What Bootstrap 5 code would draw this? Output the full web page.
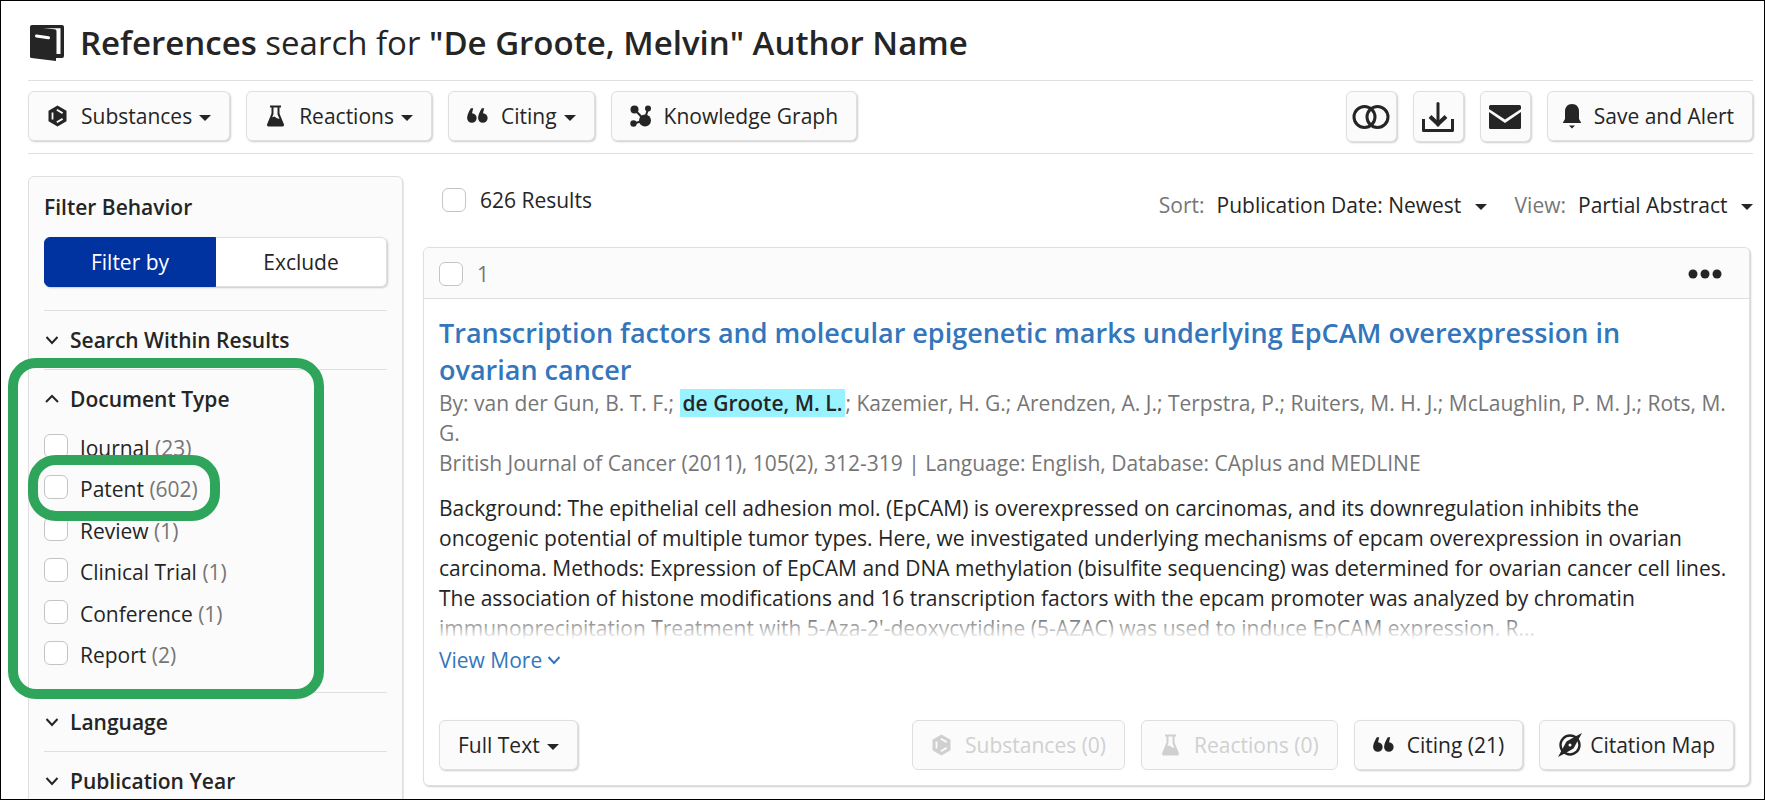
<!DOCTYPE html>
<html lang="en">
<head>
<meta charset="utf-8">
<meta name="viewport" content="width=device-width, initial-scale=1">
<title>References search</title>
<link href="https://cdn.jsdelivr.net/npm/bootstrap@5.3.0/dist/css/bootstrap.min.css" rel="stylesheet">
<style>
  :root { --ink: #252525; --muted: #767676; --line: #dfdfdf; --panel: #fbfbfb; --brand: #0032a0; --link: #3376bc; --mark: #2ea55b; }
  body { font-family: "Open Sans", "Noto Sans", sans-serif; font-size: 21px; line-height: 30px; color: var(--ink); background: #fff; }
  .page-frame { height: 100vh; overflow: hidden; border: 1px solid #000; padding: 0 11px 0 27px; }
  .page-title { height: 79px; gap: 14px; padding: 4px 0 0 2px; }
  .page-title h1 { font-size: 33px; line-height: 40px; font-weight: 400; }
  .page-title b, .heading { font-weight: 600; }
  .action-bar { border-top: 1px solid var(--line); border-bottom: 1px solid var(--line); padding: 10px 0; height: 74px; }
  .tool { --bs-btn-font-size: 21px; --bs-btn-line-height: 30px; --bs-btn-padding-x: 18px; --bs-btn-padding-y: 9px;
    --bs-btn-color: var(--ink); --bs-btn-bg: var(--panel); --bs-btn-border-color: var(--line); --bs-btn-border-radius: 6px;
    --bs-btn-hover-bg: #f1f1f1; --bs-btn-hover-border-color: #ccc;
    --bs-btn-disabled-color: #d0d0d0; --bs-btn-disabled-bg: var(--panel); --bs-btn-disabled-border-color: var(--line); --bs-btn-disabled-opacity: 1;
    display: inline-flex; align-items: center; height: 50px; white-space: nowrap; box-shadow: 1px 1px 2px rgba(0,0,0,.2); }
  .tool:disabled { box-shadow: none; }
  .tool svg { flex: none; }
  .tool .lead-icon { margin-right: 13px; }
  .tool-square { width: 51px; height: 51px; padding: 0; justify-content: center; }
  .tool-save { padding-left: 15px; }
  .down { width: 0; height: 0; border: 6px solid transparent; border-top-color: currentColor; border-bottom: 0; margin: 4px 0 0 7px; }
  .g16 { gap: 16px; }
  .columns { display: grid; grid-template-columns: 375px minmax(0, 1fr); gap: 20px; padding-top: 22px; }
  .panel { background: var(--panel); border: 1px solid var(--line); border-radius: 6px; box-shadow: 1px 1px 1px rgba(0,0,0,.1); padding: 15px 15px 200px; }
  .switch { box-shadow: 1px 1px 2px rgba(0,0,0,.2); border-radius: 6px; margin: 15px 0 23px; }
  .switch .btn { --bs-btn-font-size: 21px; --bs-btn-line-height: 30px; --bs-btn-padding-y: 9px; --bs-btn-color: var(--ink); --bs-btn-bg: #fff;
    --bs-btn-border-color: var(--line); --bs-btn-border-radius: 6px; --bs-btn-active-bg: var(--brand); --bs-btn-active-border-color: var(--brand); --bs-btn-active-color: #fff; flex: 1 1 0; }
  .facet { border-top: 1px solid var(--line); position: relative; }
  .facet-head { border: 0; background: none; padding: 14px 0 14px 1px; color: inherit; font-weight: 600; display: flex; align-items: center; gap: 11px; width: 100%; }
  .facet-open { padding-bottom: 18px; }
  .facet-list { height: 249px; padding: 0; margin: 3px 0 0; list-style: none; display: flex; flex-direction: column; justify-content: space-between; }
  .facet-list li { position: relative; display: flex; align-items: center; height: 41px; }
  .facet-list label { padding: 4px 0 0 12px; }
  .tick { width: 24px; height: 24px; flex: none; margin: 0; border: 1px solid #c4c4c4; border-radius: 6px !important; background-color: #fff; }
  .tick + .after { padding-left: 14px; }
  .count { color: var(--muted); }
  .ring { position: absolute; border: 10px solid var(--mark); border-radius: 28px; pointer-events: none; z-index: 2; }
  .ring-facet { inset: -12px 63px -7px -36px; }
  .ring-row { width: 192px; height: 66px; left: -16px; top: -12px; }
  .results-bar { height: 71px; padding: 0 0 0 19px; }
  .pick-all { padding-top: 9px; }
  .results-bar select { appearance: none; border: 0; color: var(--ink); padding: 0 25px 0 12px; font: inherit;
    background: url("data:image/svg+xml,%3Csvg xmlns='http://www.w3.org/2000/svg' width='12' height='6'%3E%3Cpath d='M0 0h12L6 6z' fill='%23252525'/%3E%3C/svg%3E") no-repeat right 0 top 14px; }
  .picks { padding-top: 14px; color: var(--muted); gap: 28px; }
  .result { --bs-card-border-color: var(--line); --bs-card-border-radius: 6px; --bs-card-inner-border-radius: 5px; --bs-card-cap-bg: var(--panel); --bs-card-color: var(--ink); margin-right: 3px; box-shadow: 1px 1px 2px rgba(0,0,0,.2); }
  .result .card-header { height: 51px; padding: 2px 27px 0 15px; }
  .result .card-body { padding: 15px; }
  .result h2 { font-size: 27px; line-height: 37px; font-weight: 600; padding-right: 32px; }
  .result h2 a, .more { color: var(--link); text-decoration: none; }
  .hit { background: #99f2ff; color: var(--ink); font-weight: 600; padding: 0 3px; }
  .abstract { position: relative; margin: 15px 0 0; }
  .abstract::after { content: ""; position: absolute; inset: auto 0 0 0; height: 36px; background: linear-gradient(rgba(255,255,255,0), #fff 90%); }
  .more { display: inline-flex; align-items: center; gap: 5px; margin: 2px 0 45px; border: 0; background: none; padding: 0; }
</style>
</head>
<body>
<svg width="0" height="0" class="position-absolute" aria-hidden="true">
  <symbol id="hex" viewBox="0 0 21 22"><path d="M10.500.5 19.500 5.700v10.600l-9 5.200-9-5.200V5.700z" fill="currentColor"/><path d="M5.500 7.500v7M9.800 4.800l5.800 3.300M9.800 17.200l5.800-3.300" stroke="#fbfbfb" stroke-width="1.800" fill="none"/></symbol>
  <symbol id="flask" viewBox="0 0 21 22"><path d="M5 .5h11v2h-1.500v6L19 19.500q.4 2-1.500 2h-14q-1.900 0-1.500-2L6.500 8.500v-6H5z" fill="currentColor"/><path d="M8.500 2.500h4v6.700l2 4.800-3-1-2-1.500-2.300.8 1.300-3.300z" fill="#fbfbfb"/></symbol>
  <symbol id="quotes" viewBox="0 0 22 16"><path d="M4 0h2.500L5.300 5.200a5 5 0 1 1-5.200 5Q.3 6 4 0zM15.500 0H18l-1.200 5.200a5 5 0 1 1-5.200 5Q11.800 6 15.500 0z" fill="currentColor"/></symbol>
  <symbol id="chev" viewBox="0 0 14 14"><path d="m1.500 4 5.500 6 5.500-6" fill="none" stroke="currentColor" stroke-width="2"/></symbol>
</svg>

<div class="page-frame">
  <header class="page-title d-flex align-items-center">
    <svg width="36" height="38" viewBox="0 0 36 38" aria-hidden="true"><path d="M2 1h30q2 0 2 2v29q0 2-2 2H2q-2 0-2-2V3q0-2 2-2z" fill="#252525"/><path d="M13 4.300h17.500V30h-4V7q0-1.500-2-1.700z" fill="#fff"/><path d="M0 32h26v5L1.500 34Q0 33.600 0 32z" fill="#252525"/><path d="m6.500 12 12 1.800" stroke="#fff" stroke-width="3" stroke-linecap="round"/></svg>
    <h1 class="m-0 text-nowrap"><b>References</b> search for <b>"De Groote, Melvin" Author Name</b></h1>
  </header>

  <div class="action-bar d-flex justify-content-between">
    <div class="d-flex g16">
      <button type="button" class="btn tool"><svg class="lead-icon" width="21" height="22"><use href="#hex"/></svg>Substances<span class="down"></span></button>
      <button type="button" class="btn tool"><svg class="lead-icon" width="21" height="22"><use href="#flask"/></svg>Reactions<span class="down"></span></button>
      <button type="button" class="btn tool"><svg class="lead-icon" width="21" height="16"><use href="#quotes"/></svg>Citing<span class="down"></span></button>
      <button type="button" class="btn tool"><svg class="lead-icon" width="21" height="22" viewBox="0 0 21 22"><g fill="currentColor"><circle cx="4.500" cy="4.500" r="4"/><circle cx="18" cy="3.500" r="3"/><circle cx="15" cy="15.500" r="6"/><circle cx="3.500" cy="18.500" r="3.200"/></g><path d="m4.500 4.500 10 10.500 3.500-11M14 15.500l-10 3" stroke="currentColor" stroke-width="2" fill="none"/></svg>Knowledge Graph</button>
    </div>
    <div class="d-flex g16">
      <button type="button" class="btn tool tool-square" aria-label="Combine"><svg width="38" height="26" viewBox="0 0 38 26" fill="none" stroke="currentColor" stroke-width="3"><circle cx="12.500" cy="13" r="10.500"/><circle cx="25.500" cy="13" r="10.500"/></svg></button>
      <button type="button" class="btn tool tool-square" aria-label="Download"><svg width="32" height="30" viewBox="0 0 32 30" fill="none" stroke="currentColor" stroke-width="3"><path d="M1.500 17v11.500h29V17" stroke-linejoin="round"/><path d="M16 1.500V23" stroke-linecap="round"/><path d="m8 14.500 8 7.500 8-7.500" stroke-width="4"/></svg></button>
      <button type="button" class="btn tool tool-square" aria-label="E-mail"><svg width="32" height="24" viewBox="0 0 32 24" fill="currentColor"><path d="M1.500 0h29Q32 0 32 1.500V4L16 14.500 0 4V1.500Q0 0 1.500 0z"/><path d="M0 7l16 11L32 7v15.500q0 1.500-1.500 1.500h-29Q0 24 0 22.500z"/></svg></button>
      <button type="button" class="btn tool tool-save"><svg class="lead-icon" width="18" height="25" viewBox="0 0 18 25" fill="currentColor"><path d="M2 8q0-8 7-8t7 8v7l2 3.500V19H0v-.5L2 15zM6 21.500h6L9 24.500z"/></svg>Save and Alert</button>
    </div>
  </div>

  <div class="columns">
    <aside class="panel">
      <div class="heading">Filter Behavior</div>
      <div class="btn-group switch d-flex" role="group" aria-label="Filter Behavior">
        <input type="radio" class="btn-check" name="mode" id="mode-by" checked><label class="btn" for="mode-by">Filter by</label>
        <input type="radio" class="btn-check" name="mode" id="mode-ex"><label class="btn" for="mode-ex">Exclude</label>
      </div>
      <section class="facet"><button type="button" class="facet-head"><svg width="14" height="14"><use href="#chev"/></svg>Search Within Results</button></section>
      <section class="facet facet-open">
        <button type="button" class="facet-head pb-2"><svg width="14" height="14" viewBox="0 0 14 14"><path d="m1 10 6-6 6 6" fill="none" stroke="currentColor" stroke-width="2"/></svg>Document Type</button>
        <ul class="facet-list">
          <li><input type="checkbox" class="form-check-input tick" id="d1"><label for="d1">Journal <span class="count">(23)</span></label></li>
          <li><input type="checkbox" class="form-check-input tick" id="d2"><label for="d2">Patent <span class="count">(602)</span></label><span class="ring ring-row"></span></li>
          <li><input type="checkbox" class="form-check-input tick" id="d3"><label for="d3">Review <span class="count">(1)</span></label></li>
          <li><input type="checkbox" class="form-check-input tick" id="d4"><label for="d4">Clinical Trial <span class="count">(1)</span></label></li>
          <li><input type="checkbox" class="form-check-input tick" id="d5"><label for="d5">Conference <span class="count">(1)</span></label></li>
          <li><input type="checkbox" class="form-check-input tick" id="d6"><label for="d6">Report <span class="count">(2)</span></label></li>
        </ul>
        <span class="ring ring-facet"></span>
      </section>
      <section class="facet"><button type="button" class="facet-head"><svg width="14" height="14"><use href="#chev"/></svg>Language</button></section>
      <section class="facet"><button type="button" class="facet-head"><svg width="14" height="14"><use href="#chev"/></svg>Publication Year</button></section>
    </aside>

    <main>
      <div class="results-bar d-flex justify-content-between align-items-start">
        <div class="pick-all d-flex align-items-center"><input type="checkbox" class="form-check-input tick" id="all"><label for="all" class="after">626 Results</label></div>
        <div class="picks d-flex">
          <div class="d-flex"><label for="sort">Sort:</label><select id="sort"><option>Publication Date: Newest</option></select></div>
          <div class="d-flex"><label for="view">View:</label><select id="view"><option>Partial Abstract</option></select></div>
        </div>
      </div>
      <article class="card result">
        <div class="card-header d-flex align-items-center justify-content-between">
          <div class="d-flex align-items-center"><input type="checkbox" class="form-check-input tick" id="r1"><label for="r1" class="after count">1</label></div>
          <button type="button" class="btn p-0 border-0 d-flex" aria-label="More options"><svg width="34" height="10" viewBox="0 0 34 10" fill="#252525"><circle cx="5" cy="5" r="4.500"/><circle cx="17" cy="5" r="4.500"/><circle cx="29" cy="5" r="4.500"/></svg></button>
        </div>
        <div class="card-body">
          <h2 class="m-0"><a href="#">Transcription factors and molecular epigenetic marks underlying EpCAM overexpression in ovarian cancer</a></h2>
          <div class="count">By: van der Gun, B. T. F.; <span class="hit">de Groote, M. L.</span>; Kazemier, H. G.; Arendzen, A. J.; Terpstra, P.; Ruiters, M. H. J.; McLaughlin, P. M. J.; Rots, M. G.</div>
          <div class="count">British Journal of Cancer (2011), 105(2), 312-319 | Language: English, Database: CAplus and MEDLINE</div>
          <p class="abstract">Background: The epithelial cell adhesion mol. (EpCAM) is overexpressed on carcinomas, and its downregulation inhibits the oncogenic potential of multiple tumor types. Here, we investigated underlying mechanisms of epcam overexpression in ovarian carcinoma. Methods: Expression of EpCAM and DNA methylation (bisulfite sequencing) was determined for ovarian cancer cell lines. The association of histone modifications and 16 transcription factors with the epcam promoter was analyzed by chromatin immunoprecipitation Treatment with 5-Aza-2'-deoxycytidine (5-AZAC) was used to induce EpCAM expression. R...</p>
          <button type="button" class="more">View More<svg width="14" height="14"><use href="#chev"/></svg></button>
          <div class="d-flex justify-content-between">
            <button type="button" class="btn tool">Full Text<span class="down"></span></button>
            <div class="d-flex g16">
              <button type="button" class="btn tool" disabled><svg class="lead-icon" width="21" height="22"><use href="#hex"/></svg>Substances (0)</button>
              <button type="button" class="btn tool" disabled><svg class="lead-icon" width="21" height="22"><use href="#flask"/></svg>Reactions (0)</button>
              <button type="button" class="btn tool"><svg class="lead-icon" width="21" height="16"><use href="#quotes"/></svg>Citing (21)</button>
              <button type="button" class="btn tool"><svg class="me-2" width="24" height="24" viewBox="0 0 24 24"><circle cx="12" cy="12" r="9.500" fill="none" stroke="currentColor" stroke-width="2.400"/><path d="M24 0 15.500 15.500Q8 20 0 24L8.500 8.500Q16 4 24 0z" fill="currentColor"/><circle cx="12" cy="12" r="1.500" fill="#fff"/></svg>Citation Map</button>
            </div>
          </div>
        </div>
      </article>
    </main>
  </div>
</div>
<script src="https://cdn.jsdelivr.net/npm/bootstrap@5.3.0/dist/js/bootstrap.bundle.min.js"></script>
</body>
</html>
